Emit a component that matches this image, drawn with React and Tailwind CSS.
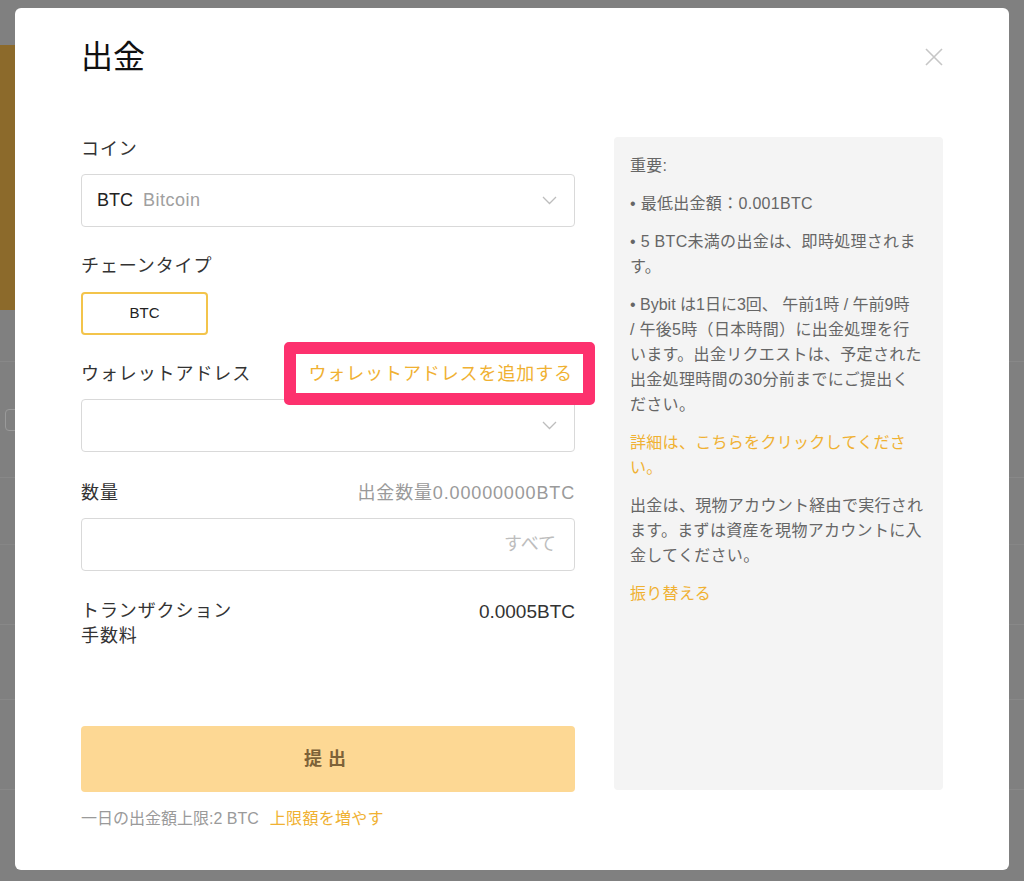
import { useState } from "react";

function Chevron() {
  return (
    <svg width="15" height="9" viewBox="0 0 15 9" fill="none">
      <path d="M1 1 L7.5 7.5 L14 1" stroke="#bdbdbd" strokeWidth="1.3" />
    </svg>
  );
}

function CloseIcon() {
  return (
    <svg width="18" height="18" viewBox="0 0 18 18" fill="none">
      <path d="M1 1 L17 17 M17 1 L1 17" stroke="#c6c6c6" strokeWidth="1.6" />
    </svg>
  );
}

export default function App() {
  const [chain] = useState("BTC");

  return (
    <div className="relative h-[881px] w-full overflow-hidden bg-[#808080] font-['Liberation_Sans','Noto_Sans_CJK_JP',sans-serif]">
      {/* page behind the overlay */}
      <div className="flex flex-col">
        <div className="h-[45px]"></div>
        <div className="h-[265px] w-[600px] bg-[#8c6a2b]"></div>
        <div className="h-[52px] border-b border-[#888]"></div>
        <div className="h-[116px] border-b border-[#888]">
          <div className="ml-[5px] mt-[47px] h-[22px] w-[20px] rounded-[4px] border border-[#9a9a9a]"></div>
        </div>
        <div className="h-[67px] border-b border-[#868686]"></div>
        <div className="h-[80px] border-b border-[#888]"></div>
        <div className="h-[75px] border-b border-[#888]"></div>
        <div className="h-[90px] border-b border-[#888]"></div>
      </div>

      {/* withdraw modal */}
      <div className="absolute left-[15px] top-[8px] h-[862px] w-[994px] rounded-[6px] bg-white px-[66px] pt-[25px]">
        <div className="flex h-[48px] items-center justify-between">
          <h1 className="text-[32px] leading-[48px] text-[#111]">出金</h1>
          <CloseIcon />
        </div>

        <div className="mt-[56px] flex gap-[39px]">
          {/* form */}
          <div className="flex w-[494px] flex-col">
            <label className="text-[18px] leading-[24px] tracking-[0.9px] text-[#333]">コイン</label>
            <div className="mt-[13px] flex h-[53px] items-center justify-between rounded-[4px] border border-[#d9d9d9] pl-[15px] pr-[17px]">
              <div className="flex items-center gap-[10px] text-[18px]">
                <span className="text-[#222]">BTC</span>
                <span className="tracking-[0.5px] text-[#a0a0a0]">Bitcoin</span>
              </div>
              <Chevron />
            </div>

            <label className="mt-[27px] text-[18px] leading-[24px] tracking-[0.9px] text-[#333]">チェーンタイプ</label>
            <div className="mt-[14px] flex">
              <button className="flex h-[43px] w-[127px] items-center justify-center rounded-[4px] border-2 border-[#f3c44b] text-[15px] font-medium text-[#222]">
                {chain}
              </button>
            </div>

            <div className="mt-[27px] flex items-center justify-between text-[18px] leading-[24px] tracking-[0.9px]">
              <span className="text-[#333]">ウォレットアドレス</span>
              <span className="relative mr-[2px] text-[#f0b132]">
                ウォレットアドレスを追加する
                <span className="absolute -bottom-[19px] -left-[24px] -right-[22px] -top-[20px] z-10 rounded-[5px] border-[12px] border-[#fd316e]"></span>
              </span>
            </div>
            <div className="mt-[13px] flex h-[53px] items-center justify-end rounded-[4px] border border-[#d9d9d9] pr-[17px]">
              <Chevron />
            </div>

            <div className="mt-[29px] flex items-center justify-between leading-[24px]">
              <span className="text-[18px] tracking-[0.9px] text-[#333]">数量</span>
              <span className="text-[18px] tracking-[0.85px] text-[#9a9a9a]">出金数量0.00000000BTC</span>
            </div>
            <div className="mt-[13px] flex h-[53px] items-center justify-end rounded-[4px] border border-[#d9d9d9] pr-[18px]">
              <span className="text-[18px] text-[#bdbdbd]">すべて</span>
            </div>

            <div className="mt-[28px] flex items-start justify-between text-[18px] leading-[25px]">
              <span className="tracking-[0.9px] text-[#333]">
                トランザクション
                <br />
                手数料
              </span>
              <span className="text-[19px] text-[#333]">0.0005BTC</span>
            </div>

            <button className="mt-[77px] flex h-[66px] items-center justify-center rounded-[4px] bg-[#fdd894] text-[18px] font-bold tracking-[6px] text-[#7d6238]">
              提出
            </button>

            <p className="mt-[15px] text-[16px] leading-[24px] text-[#9a9a9a]">
              一日の出金額上限:2 BTC
              <span className="ml-[11px] tracking-[0.3px] text-[#f0b132]">上限額を増やす</span>
            </p>
          </div>

          {/* notes */}
          <div className="flex h-[653px] w-[329px] flex-col gap-[13px] rounded-[4px] bg-[#f4f4f4] p-[16px] text-[16px] leading-[25px] tracking-[0.3px] text-[#666]">
            <p>重要:</p>
            <p>• 最低出金額：0.001BTC</p>
            <p className="whitespace-nowrap">
              • 5 BTC未満の出金は、即時処理されま
              <br />
              す。
            </p>
            <p className="whitespace-nowrap">
              <span className="tracking-[0px]">• Bybit は1日に3回、 午前1時 / 午前9時</span>
              <br />
              / 午後5時（日本時間）に出金処理を行
              <br />
              います。出金リクエストは、予定された
              <br />
              出金処理時間の30分前までにご提出く
              <br />
              ださい。
            </p>
            <p className="whitespace-nowrap text-[#f0b132]">
              詳細は、こちらをクリックしてくださ
              <br />
              い。
            </p>
            <p className="whitespace-nowrap">
              出金は、現物アカウント経由で実行され
              <br />
              ます。まずは資産を現物アカウントに入
              <br />
              金してください。
            </p>
            <p className="text-[#f0b132]">振り替える</p>
          </div>
        </div>
      </div>
    </div>
  );
}
